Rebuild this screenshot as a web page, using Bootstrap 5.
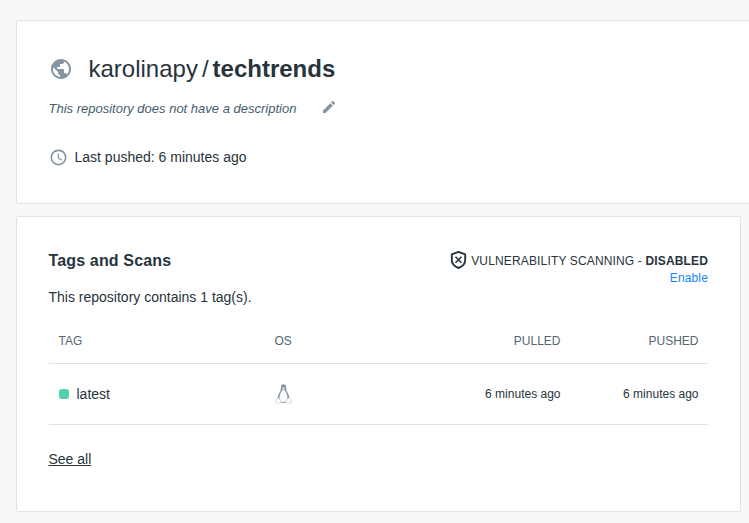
<!DOCTYPE html>
<html lang="en">
<head>
<meta charset="utf-8">
<meta name="viewport" content="width=device-width, initial-scale=1">
<title>karolinapy/techtrends</title>
<link href="https://cdn.jsdelivr.net/npm/bootstrap@5.3.0/dist/css/bootstrap.min.css" rel="stylesheet">
<style>
body { font-family: "Liberation Sans", Arial, sans-serif; font-size: 14px; line-height: 20px; color: #27343b; background: #f7f8fa; height: 523px; overflow: hidden; padding: 20px 0 0 16px; }
svg { display: block; flex: none; }
.panel { border: 1px solid #e0e4e8; border-radius: 2px; padding: 32px 32px 32px 31.5px; }
.repo-panel { height: 184px; border-right: 0; border-radius: 2px 0 0 2px; margin-bottom: 12px; }
.tags-panel { height: 296px; width: 725px; }
.repo-name { font-size: 24px; line-height: 32px; margin: 0 0 0 16px; }
.slash { margin: 0 4px 0 4px; }
.repo-desc { font-size: 13px; color: #445d6e; margin-top: 14px; }
.desc-edit { margin: -4px 0 0 24.5px; }
.pushed-row { margin-top: 28px; }
.pushed-row span { margin-left: 7px; }
.muted-icon { fill: #8494a0; }
.section-title { font-size: 16px; line-height: 24px; letter-spacing: .15px; }
.repo-count { margin: 14px 0 0; }
.scan-status { font-size: 12px; line-height: 17px; margin-top: 3px; letter-spacing: .15px; }
.scan-status > div { height: 19px; margin-bottom: -1px; }
.scan-status svg { margin: -3px 4px 0 0; }
.scan-status a { color: #1488f5; }
.tags-table { table-layout: fixed; margin-top: 10px; color: #27343b; --bs-table-bg: transparent; --bs-table-color: #27343b; }
.tags-table > :not(caption) > * > * { border-bottom: 1px solid #e1e2e3; padding: 0 10px; vertical-align: middle; }
.tags-table > thead > tr > th { font-size: 12px; font-weight: 400; color: #556570; height: 46px; padding-top: 3px; }
.tags-table td { height: 61px; }
.tags-table .when { font-size: 12px; }
.tags-table > :not(caption) > * > .text-end { padding-right: 9.5px; }
.col-tag { width: 216px; }
.col-os { width: 168px; }
.col-pushed { width: 138px; }
.status-dot { width: 10px; height: 10px; border-radius: 3px; background: #54d0af; margin-right: 8px; }
.see-all { color: #27343b; margin-top: 24px; }
</style>
<script src="https://cdn.jsdelivr.net/npm/bootstrap@5.3.0/dist/js/bootstrap.bundle.min.js"></script>
</head>
<body>
<section class="panel repo-panel bg-white">
  <div class="d-flex align-items-center">
    <svg class="muted-icon" width="24" height="24" viewBox="0 0 24 24"><path d="M12 2C6.480 2 2 6.480 2 12s4.480 10 10 10 10-4.480 10-10S17.520 2 12 2zm-1 17.930c-3.950-.490-7-3.850-7-7.930 0-.620.080-1.210.210-1.790L9 15v1c0 1.100.900 2 2 2v1.930zm6.900-2.540c-.260-.810-1-1.390-1.900-1.390h-1v-3c0-.550-.450-1-1-1H8v-2h2c.550 0 1-.450 1-1V7h2c1.100 0 2-.900 2-2v-.410c2.930 1.190 5 4.060 5 7.410 0 2.080-.800 3.970-2.100 5.390z"/></svg>
    <h1 class="repo-name fw-normal d-flex"><span>karolinapy</span><span class="slash">/</span><span class="fw-bold">techtrends</span></h1>
  </div>
  <div class="repo-desc d-flex align-items-center">
    <em>This repository does not have a description</em>
    <svg class="muted-icon desc-edit" width="16" height="16" viewBox="0 0 24 24"><path d="M3 17.250V21h3.750L17.810 9.940l-3.750-3.750L3 17.250zM20.710 7.040c.390-.390.390-1.020 0-1.410l-2.340-2.340c-.390-.390-1.020-.390-1.410 0l-1.830 1.830 3.750 3.750 1.830-1.830z"/></svg>
  </div>
  <div class="pushed-row d-flex align-items-center">
    <svg class="muted-icon" width="19" height="19" viewBox="0 0 24 24"><path d="M11.990 2C6.470 2 2 6.480 2 12s4.470 10 9.990 10C17.520 22 22 17.520 22 12S17.520 2 11.990 2zM12 20c-4.420 0-8-3.580-8-8s3.580-8 8-8 8 3.580 8 8-3.580 8-8 8zm.500-13H11v6l5.250 3.150.750-1.230-4.500-2.670z"/></svg>
    <span>Last pushed: 6 minutes ago</span>
  </div>
</section>
<section class="panel tags-panel bg-white">
  <div class="d-flex justify-content-between align-items-start">
    <div>
      <h2 class="section-title fw-bold mb-0">Tags and Scans</h2>
      <p class="repo-count">This repository contains 1 tag(s).</p>
    </div>
    <div class="scan-status text-end">
      <div class="d-flex align-items-center">
        <svg width="17" height="20" viewBox="0 0 17 20" fill="none" stroke="#27343b"><path d="M8.500 1.900L15.200 4.400V10C15.200 13.700 12.400 16.500 8.500 18C4.600 16.500 1.800 13.700 1.800 10V4.400Z" stroke-width="1.900" stroke-linejoin="round"/><path d="M5.500 6.800L11.500 12.800M11.500 6.800L5.500 12.800" stroke-width="1.600"/></svg>
        <span>VULNERABILITY SCANNING - <b>DISABLED</b></span>
      </div>
      <a href="#" class="text-decoration-none d-block">Enable</a>
    </div>
  </div>
  <table class="table tags-table mb-0">
    <thead>
      <tr><th class="col-tag">TAG</th><th class="col-os">OS</th><th class="text-end">PULLED</th><th class="col-pushed text-end">PUSHED</th></tr>
    </thead>
    <tbody>
      <tr>
        <td><div class="d-flex align-items-center"><span class="status-dot"></span>latest</div></td>
        <td>
          <svg width="17" height="20" viewBox="0 0 17 20">
            <path d="M8.500.3C6.700.3 5.900 1.500 5.900 3.200C6 6 5.300 7 4.200 9C3.200 11 2.500 13 2.700 15L5.800 18.500H11.200L14.400 15C14.600 13 13.900 11 12.800 9C11.700 7 11.200 6 11.200 3.200C11.200 1.500 10.300.3 8.500.3Z" fill="#8797a1"/>
            <path d="M8.500 5.600C7.500 5.800 7 6.600 6.200 8.200C5 10.200 4.200 12.500 4.600 14.500L6.400 18H10.700L12.200 14.500C12.800 12.500 12 10.200 10.800 8.200C10 6.600 9.500 5.800 8.500 5.600Z" fill="#fff"/>
            <path d="M6.800 4.200L8.500 3.200L10.300 4.200L8.500 5.300Z" fill="#e4e8ea"/>
            <path d="M2.800 14L.8 15.200L.5 18.300L4.500 19.500L6.300 18.300L5.600 16.500L4 14.200Z M14.200 14L16.200 15.300L16.500 17.800L12.600 19.500L10.700 18.300L11.400 15.200Z" fill="#fff" stroke="#c4cbd0" stroke-width=".7" stroke-linejoin="round"/>
            <path d="M6.300 18.400H10.700" stroke="#8797a1" stroke-width=".9"/>
          </svg>
        </td>
        <td class="when text-end">6 minutes ago</td>
        <td class="when text-end">6 minutes ago</td>
      </tr>
    </tbody>
  </table>
  <a href="#" class="see-all d-inline-block text-decoration-underline">See all</a>
</section>
</body>
</html>
